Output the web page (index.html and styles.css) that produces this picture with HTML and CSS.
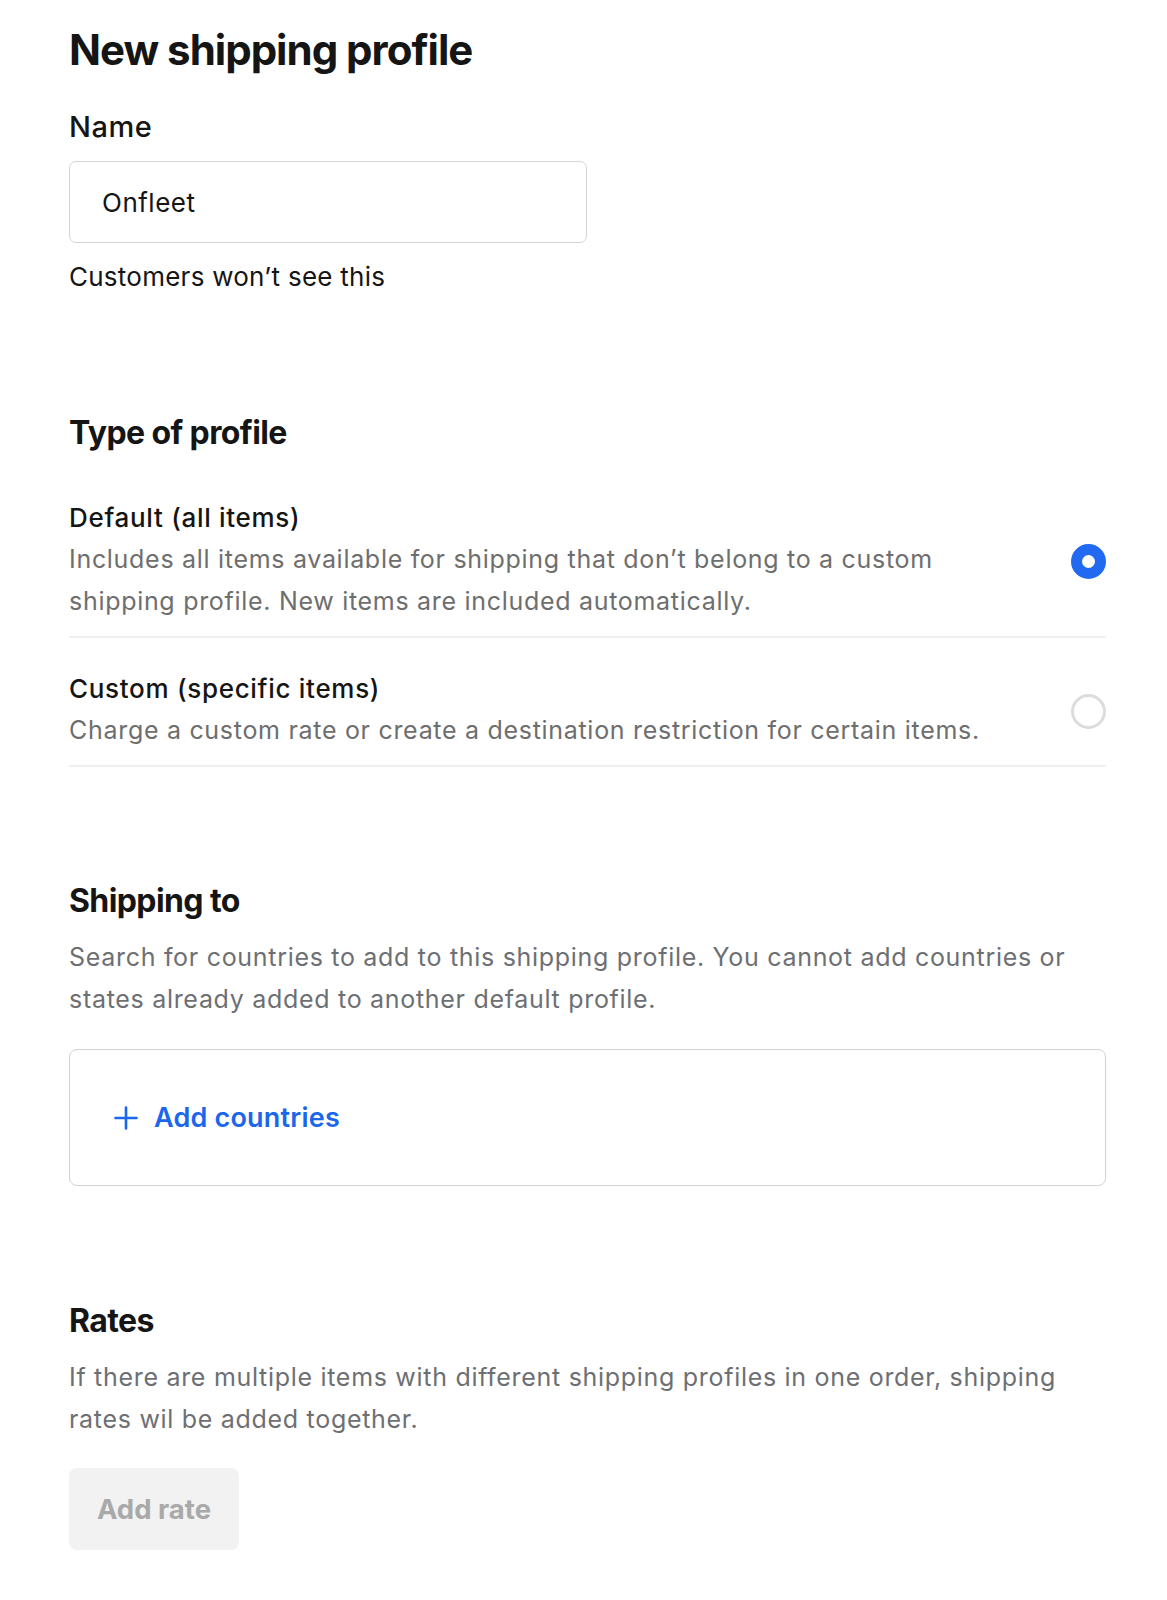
FILE: index.html
```html
<!DOCTYPE html>
<html lang="en">
<head>
<meta charset="utf-8">
<title>New shipping profile</title>
<link rel="stylesheet" href="styles.css">
</head>
<body>
<main class="page">
  <h1 class="title">New shipping profile</h1>

  <section class="field">
    <label class="label" for="name">Name</label>
    <div class="input"><span class="input-value">Onfleet</span></div>
    <p class="hint">Customers won’t see this</p>
  </section>

  <section class="section section-type">
    <h2 class="heading">Type of profile</h2>
    <div class="options">
      <div class="option">
        <div class="option-text">
          <div class="option-title">Default (all items)</div>
          <div class="option-desc">Includes all items available for shipping that don’t belong to a custom shipping profile. New items are included automatically.</div>
        </div>
        <span class="radio radio-on"></span>
      </div>
      <div class="option">
        <div class="option-text">
          <div class="option-title">Custom (specific items)</div>
          <div class="option-desc">Charge a custom rate or create a destination restriction for certain items.</div>
        </div>
        <span class="radio"></span>
      </div>
    </div>
  </section>

  <section class="section section-ship">
    <h2 class="heading">Shipping to</h2>
    <p class="desc">Search for countries to add to this shipping profile. You cannot add countries or states already added to another default profile.</p>
    <div class="countries">
      <span class="add-link">
        <svg class="plus" width="24" height="24" viewBox="0 0 24 24" aria-hidden="true"><path d="M12 1.5v21M1.5 12h21" stroke="#1a66ec" stroke-width="2.6" stroke-linecap="round" fill="none"/></svg>
        Add countries
      </span>
    </div>
  </section>

  <section class="section section-rates">
    <h2 class="heading">Rates</h2>
    <p class="desc">If there are multiple items with different shipping profiles in one order, shipping rates wil be added together.</p>
    <button class="btn-disabled" type="button">Add rate</button>
  </section>
</main>
</body>
</html>
```

FILE: styles.css
```css
* { box-sizing: border-box; }
html, body { margin: 0; padding: 0; background: #fff; }
body {
  font-family: Inter, "Noto Sans", "Liberation Sans", sans-serif;
  color: #151515;
}
.page {
  width: 1106px;
  padding: 24px 0 40px 69px;
}
.title {
  margin: 0;
  font-size: 42px;
  line-height: 52px;
  font-weight: 700;
  letter-spacing: -1px;
}
.field { margin-top: 34px; }
.label {
  display: block;
  font-size: 29px;
  line-height: 34px;
  font-weight: 500;
  letter-spacing: 0.5px;
}
.input {
  margin-top: 17px;
  width: 518px;
  height: 82px;
  border: 1.5px solid #d4d4d4;
  border-radius: 7px;
  display: flex;
  align-items: center;
  padding-left: 32px;
}
.input-value { font-size: 26px; letter-spacing: 0.5px; }
.hint {
  margin: 17px 0 0;
  font-size: 26px;
  line-height: 34px;
  letter-spacing: 0.25px;
}
.heading {
  margin: 0;
  font-size: 32px;
  line-height: 40px;
  font-weight: 700;
  letter-spacing: -0.6px;
}
.section-type { margin-top: 119px; }
.options { margin-top: 48px; }
.option {
  display: flex;
  align-items: center;
  justify-content: space-between;
  border-bottom: 2px solid #f0f0f0;
  padding: 0 0 14px;
}
.option + .option { padding-top: 34px; }
.option-text { flex: 1; min-width: 0; max-width: 945px; }
.option-title {
  font-size: 26px;
  line-height: 34px;
  font-weight: 500;
  letter-spacing: 0.7px;
}
.option-desc {
  margin-top: 3px;
  font-size: 25px;
  line-height: 42px;
  letter-spacing: 0.7px;
  color: #6e6e6e;
}
.radio {
  flex: none;
  width: 35px;
  height: 35px;
  border-radius: 50%;
  border: 3px solid #dcdcdc;
}
.radio-on {
  border: 11px solid #2169f0;
  background: #fff;
}
.section-ship { margin-top: 114px; }
.desc {
  margin: 15px 0 0;
  font-size: 25px;
  line-height: 42px;
  letter-spacing: 0.7px;
  color: #6d6f73;
}
.countries {
  margin-top: 29px;
  height: 137px;
  border: 1.5px solid #cfd2d6;
  border-radius: 8px;
  display: flex;
  align-items: center;
  padding-left: 44px;
}
.add-link {
  display: inline-flex;
  align-items: center;
  gap: 16px;
  color: #1a66ec;
  font-size: 27px;
  font-weight: 600;
  letter-spacing: 0.2px;
}
.section-rates { margin-top: 115px; }
.btn-disabled {
  margin-top: 28px;
  width: 170px;
  height: 82px;
  border: none;
  border-radius: 8px;
  background: #f2f2f2;
  color: #a9a9a9;
  font-family: inherit;
  font-size: 27.5px;
  font-weight: 700;
}
```
